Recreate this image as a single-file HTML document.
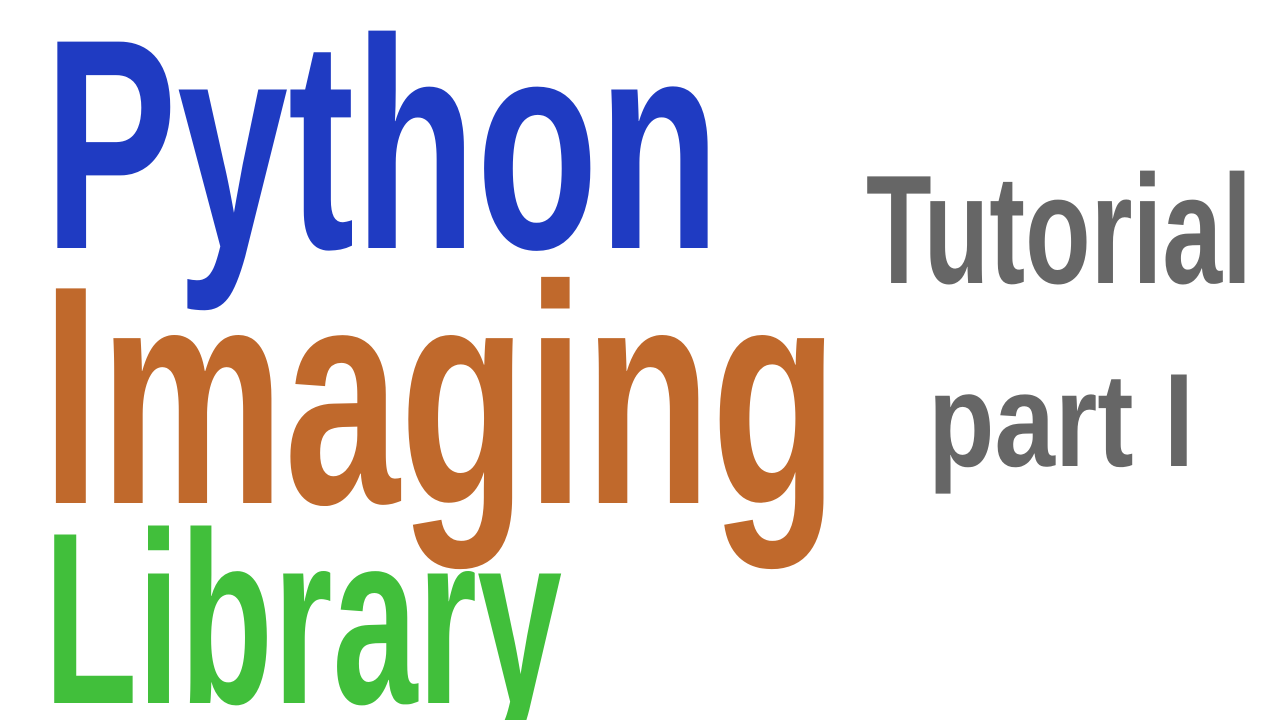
<!DOCTYPE html>
<html><head><meta charset="utf-8"><style>html,body{margin:0;padding:0;background:#fff;width:1280px;height:720px;overflow:hidden}</style></head>
<body>
<svg width="1280" height="720" viewBox="0 0 1280 720" xmlns="http://www.w3.org/2000/svg" style="display:block">
<rect width="1280" height="720" fill="#fff"/>
<g font-family="'Liberation Sans Narrow','Liberation Sans',sans-serif" font-weight="bold">
<text x="44" y="248" font-size="300" fill="#1f3bc2" textLength="676" lengthAdjust="spacingAndGlyphs">Python</text>
<text x="42" y="503" font-size="312" fill="#c0692c" textLength="796" lengthAdjust="spacingAndGlyphs">Imaging</text>
<text x="44" y="703" font-size="245" fill="#41bf3b" textLength="518" lengthAdjust="spacingAndGlyphs">Library</text>
<text x="866" y="283" font-size="155" fill="#666666" textLength="386" lengthAdjust="spacingAndGlyphs">Tutorial</text>
<text x="928" y="466" font-size="133" fill="#666666" textLength="266" lengthAdjust="spacingAndGlyphs">part I</text>
</g>
</svg>
</body></html>
